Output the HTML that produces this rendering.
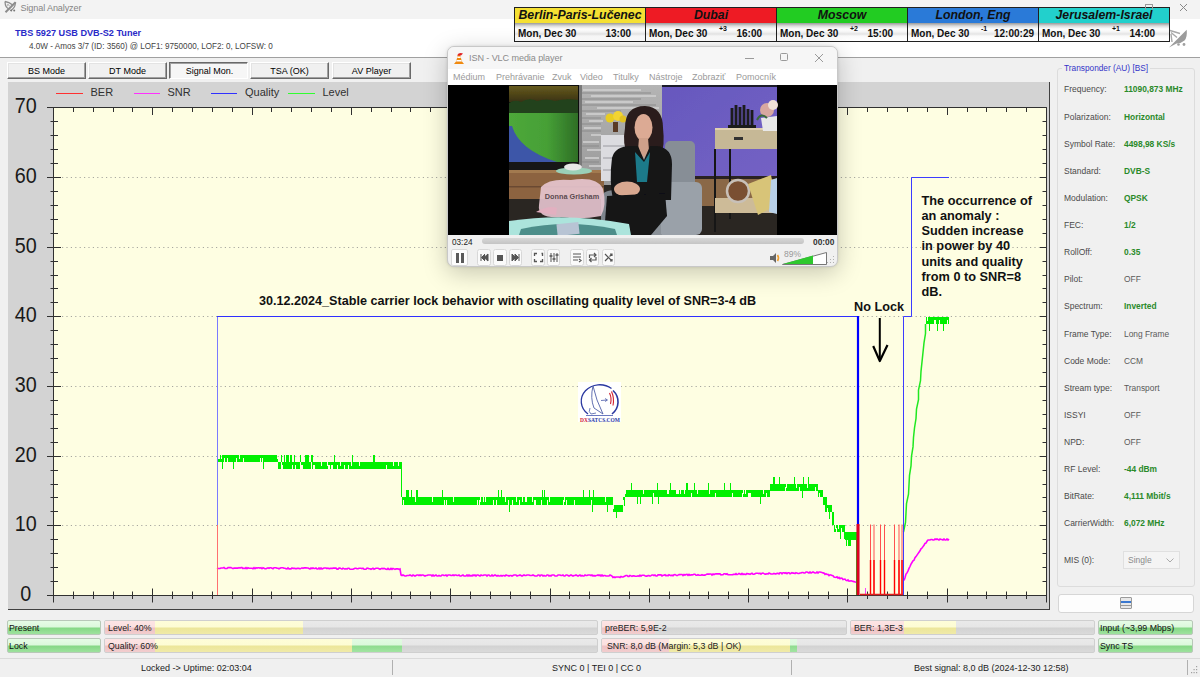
<!DOCTYPE html>
<html><head><meta charset="utf-8">
<style>
*{margin:0;padding:0;box-sizing:border-box}
html,body{width:1200px;height:677px;overflow:hidden;background:#f0f0f0;font-family:"Liberation Sans",sans-serif;position:relative}
.a{position:absolute}
#title{left:0;top:0;width:1200px;height:19px;background:#f3f3f3}
#hdr{left:0;top:19px;width:1200px;height:39px;background:#fff;border-bottom:1px solid #a0a0a0}
.btn{position:absolute;top:62px;height:17px;width:79px;background:#f0f0f0;border-top:1px solid #fff;border-left:1px solid #fff;border-right:1px solid #696969;border-bottom:1px solid #696969;box-shadow:inset -1px -1px 0 #a0a0a0, inset 1px 1px 0 #e3e3e3;font-size:9px;text-align:center;line-height:16px;color:#000}
.btn.pr{padding-left:2px;line-height:17px;border-top:1px solid #696969;border-left:1px solid #696969;border-right:1px solid #fff;border-bottom:1px solid #fff;box-shadow:inset 1px 1px 0 #a0a0a0;background:#f6f6f6}
#chart{left:8px;top:82px;width:1042px;height:528px;background:#d3d3d3;border-right:1px solid #404040;border-bottom:1px solid #404040}
/* time table */
#tz{left:514px;top:7px;width:656px;height:35px;border:1px solid #202020;background:#fff}
.tc{position:absolute;top:0;height:33px;border-right:1px solid #202020}
.th{position:absolute;left:0;top:0;right:0;height:15px;font-weight:bold;font-style:italic;font-size:12.3px;line-height:15px;text-align:center;color:#111}
.tb{position:absolute;left:0;top:15px;right:0;height:18px;background:linear-gradient(#9a9a9a 0px,#dcdcdc 3px,#fff 6px,#f4f4f4 9px,#e4e4e4 11px,#fafafa 13px,#fff 17px);font-weight:bold;font-size:10px;line-height:22px;color:#111}
.tb .d{position:absolute;left:3px;top:0}
.tb .t{position:absolute;right:14px;top:0}
.tb .o{position:absolute;left:73px;top:-5px;font-size:7px}
/* right panel */
#grp{left:1057px;top:68px;width:138px;height:519px;border:1px solid #dcdcdc;border-radius:3px}
#grpt{left:1062px;top:62px;padding:0 2px;background:#f0f0f0;font-size:8.3px;color:#3434c8;line-height:12px}
.rl{position:absolute;left:1064px;font-size:8.5px;color:#4a4a4a;line-height:12px}
.rv{position:absolute;left:1124px;font-size:8.4px;color:#2a8a2a;font-weight:bold;line-height:12px}
.rv.g{color:#5a5a5a;font-weight:normal}
/* bottom bars */
.bar{position:absolute;height:15px;border:1px solid #cfcfcf;border-radius:2px;background:linear-gradient(#e9e9e9 0,#e6e6e6 45%,#d2d2d2 55%,#dadada 100%);overflow:hidden}
.bar .f{position:absolute;top:0;bottom:0}
.bar .txt{position:absolute;left:3px;top:0;font-size:8.8px;line-height:14.5px;color:#222}
.red{background:linear-gradient(#fde4e4 0,#fbe0e0 45%,#eec2c4 55%,#f2cdce 100%)}
.yel{background:linear-gradient(#fefdd8 0,#fdfcd4 45%,#ece69a 55%,#f0eaa8 100%)}
.grn{background:linear-gradient(#e2fbe2 0,#dcf8dc 45%,#8fdc8f 55%,#a2e4a2 100%)}
.gbar{position:absolute;height:15px;border:1px solid #b8c8b8;border-radius:2px;background:linear-gradient(#e6fce6 0,#dcf8dc 45%,#86d886 55%,#9ee29e 100%)}
.gbar .txt{position:absolute;left:1px;top:0;font-size:8.8px;line-height:14.5px;color:#111}
/* status */
#status{left:0;top:658px;width:1200px;height:19px;border-top:1px solid #dadada;background:#f0f0f0}
.st{position:absolute;top:662px;font-size:9px;color:#222;line-height:12px}
.sep{position:absolute;top:660px;width:1px;height:15px;background:#b0b0b0}
/* VLC */
#vlc{left:447px;top:46px;width:391px;height:221px;background:#f0f0f0;border:1px solid #c8c8c8;border-radius:7px;box-shadow:0 6px 24px rgba(0,0,0,0.22),0 0 3px rgba(0,0,0,0.12);overflow:hidden}
</style></head><body>
<div class="a" id="title"></div>
<div class="a" id="hdr"></div>
<div class="btn" style="left:7px">BS Mode</div>
<div class="btn" style="left:88px">DT Mode</div>
<div class="btn pr" style="left:169px">Signal Mon.</div>
<div class="btn" style="left:250px">TSA (OK)</div>
<div class="btn" style="left:332px">AV Player</div>
<div class="a" id="chart"></div>
<svg class="a" style="left:0;top:0" width="1200" height="677" font-family="Liberation Sans, sans-serif"><rect x="53.5" y="107.5" width="993.0" height="487.5" fill="#fefee2"/><line x1="62" y1="525.5" x2="1043" y2="525.5" stroke="#a8a8a0" stroke-width="1" stroke-dasharray="1.2 3.2"/><line x1="62" y1="456.5" x2="1043" y2="456.5" stroke="#a8a8a0" stroke-width="1" stroke-dasharray="1.2 3.2"/><line x1="62" y1="386.5" x2="1043" y2="386.5" stroke="#a8a8a0" stroke-width="1" stroke-dasharray="1.2 3.2"/><line x1="62" y1="316.5" x2="1043" y2="316.5" stroke="#a8a8a0" stroke-width="1" stroke-dasharray="1.2 3.2"/><line x1="62" y1="247.5" x2="1043" y2="247.5" stroke="#a8a8a0" stroke-width="1" stroke-dasharray="1.2 3.2"/><line x1="62" y1="177.5" x2="1043" y2="177.5" stroke="#a8a8a0" stroke-width="1" stroke-dasharray="1.2 3.2"/><path d="M53.5 107.5 V602 M1046.5 107.5 V602 M47 107.5 H1046.5 M47 595.5 H1046.5" stroke="#303030" stroke-width="1" fill="none"/><path d="M47 595.5 H61 M1040 595.5 H1046.5 M50.5 581.5 H58 M1042.5 581.5 H1046.5 M50.5 567.5 H58 M1042.5 567.5 H1046.5 M50.5 553.5 H58 M1042.5 553.5 H1046.5 M50.5 539.5 H58 M1042.5 539.5 H1046.5 M47 525.5 H61 M1040 525.5 H1046.5 M50.5 511.5 H58 M1042.5 511.5 H1046.5 M50.5 497.5 H58 M1042.5 497.5 H1046.5 M50.5 484.5 H58 M1042.5 484.5 H1046.5 M50.5 470.5 H58 M1042.5 470.5 H1046.5 M47 456.5 H61 M1040 456.5 H1046.5 M50.5 442.5 H58 M1042.5 442.5 H1046.5 M50.5 428.5 H58 M1042.5 428.5 H1046.5 M50.5 414.5 H58 M1042.5 414.5 H1046.5 M50.5 400.5 H58 M1042.5 400.5 H1046.5 M47 386.5 H61 M1040 386.5 H1046.5 M50.5 372.5 H58 M1042.5 372.5 H1046.5 M50.5 358.5 H58 M1042.5 358.5 H1046.5 M50.5 344.5 H58 M1042.5 344.5 H1046.5 M50.5 330.5 H58 M1042.5 330.5 H1046.5 M47 316.5 H61 M1040 316.5 H1046.5 M50.5 302.5 H58 M1042.5 302.5 H1046.5 M50.5 288.5 H58 M1042.5 288.5 H1046.5 M50.5 275.5 H58 M1042.5 275.5 H1046.5 M50.5 261.5 H58 M1042.5 261.5 H1046.5 M47 247.5 H61 M1040 247.5 H1046.5 M50.5 233.5 H58 M1042.5 233.5 H1046.5 M50.5 219.5 H58 M1042.5 219.5 H1046.5 M50.5 205.5 H58 M1042.5 205.5 H1046.5 M50.5 191.5 H58 M1042.5 191.5 H1046.5 M47 177.5 H61 M1040 177.5 H1046.5 M50.5 163.5 H58 M1042.5 163.5 H1046.5 M50.5 149.5 H58 M1042.5 149.5 H1046.5 M50.5 135.5 H58 M1042.5 135.5 H1046.5 M50.5 121.5 H58 M1042.5 121.5 H1046.5 M47 107.5 H61 M1040 107.5 H1046.5 M53.5 588.5 V602.5 M53.5 107.5 V115 M73.5 591.5 V599 M73.5 107.5 V112 M93.5 591.5 V599 M93.5 107.5 V112 M113.5 591.5 V599 M113.5 107.5 V112 M132.5 591.5 V599 M132.5 107.5 V112 M152.5 588.5 V602.5 M152.5 107.5 V115 M172.5 591.5 V599 M172.5 107.5 V112 M192.5 591.5 V599 M192.5 107.5 V112 M212.5 591.5 V599 M212.5 107.5 V112 M232.5 591.5 V599 M232.5 107.5 V112 M252.5 588.5 V602.5 M252.5 107.5 V115 M271.5 591.5 V599 M271.5 107.5 V112 M291.5 591.5 V599 M291.5 107.5 V112 M311.5 591.5 V599 M311.5 107.5 V112 M331.5 591.5 V599 M331.5 107.5 V112 M351.5 588.5 V602.5 M351.5 107.5 V115 M371.5 591.5 V599 M371.5 107.5 V112 M391.5 591.5 V599 M391.5 107.5 V112 M410.5 591.5 V599 M410.5 107.5 V112 M430.5 591.5 V599 M430.5 107.5 V112 M450.5 588.5 V602.5 M450.5 107.5 V115 M470.5 591.5 V599 M470.5 107.5 V112 M490.5 591.5 V599 M490.5 107.5 V112 M510.5 591.5 V599 M510.5 107.5 V112 M530.5 591.5 V599 M530.5 107.5 V112 M550.5 588.5 V602.5 M550.5 107.5 V115 M569.5 591.5 V599 M569.5 107.5 V112 M589.5 591.5 V599 M589.5 107.5 V112 M609.5 591.5 V599 M609.5 107.5 V112 M629.5 591.5 V599 M629.5 107.5 V112 M649.5 588.5 V602.5 M649.5 107.5 V115 M669.5 591.5 V599 M669.5 107.5 V112 M689.5 591.5 V599 M689.5 107.5 V112 M708.5 591.5 V599 M708.5 107.5 V112 M728.5 591.5 V599 M728.5 107.5 V112 M748.5 588.5 V602.5 M748.5 107.5 V115 M768.5 591.5 V599 M768.5 107.5 V112 M788.5 591.5 V599 M788.5 107.5 V112 M808.5 591.5 V599 M808.5 107.5 V112 M828.5 591.5 V599 M828.5 107.5 V112 M847.5 588.5 V602.5 M847.5 107.5 V115 M867.5 591.5 V599 M867.5 107.5 V112 M887.5 591.5 V599 M887.5 107.5 V112 M907.5 591.5 V599 M907.5 107.5 V112 M927.5 591.5 V599 M927.5 107.5 V112 M947.5 588.5 V602.5 M947.5 107.5 V115 M967.5 591.5 V599 M967.5 107.5 V112 M986.5 591.5 V599 M986.5 107.5 V112 M1006.5 591.5 V599 M1006.5 107.5 V112 M1026.5 591.5 V599 M1026.5 107.5 V112 M1046.5 588.5 V602.5 M1046.5 107.5 V115" stroke="#303030" stroke-width="1" fill="none"/><text transform="translate(25.8 600.8) scale(0.92 1)" text-anchor="middle" font-size="21.5" fill="#1a1a1a">0</text><text transform="translate(25.8 531.1) scale(0.92 1)" text-anchor="middle" font-size="21.5" fill="#1a1a1a">10</text><text transform="translate(25.8 461.5) scale(0.92 1)" text-anchor="middle" font-size="21.5" fill="#1a1a1a">20</text><text transform="translate(25.8 391.8) scale(0.92 1)" text-anchor="middle" font-size="21.5" fill="#1a1a1a">30</text><text transform="translate(25.8 322.1) scale(0.92 1)" text-anchor="middle" font-size="21.5" fill="#1a1a1a">40</text><text transform="translate(25.8 252.5) scale(0.92 1)" text-anchor="middle" font-size="21.5" fill="#1a1a1a">50</text><text transform="translate(25.8 182.8) scale(0.92 1)" text-anchor="middle" font-size="21.5" fill="#1a1a1a">60</text><text transform="translate(25.8 113.1) scale(0.92 1)" text-anchor="middle" font-size="21.5" fill="#1a1a1a">70</text><line x1="56" y1="93.5" x2="83" y2="93.5" stroke="#ff3030" stroke-width="1"/><text x="90.5" y="96.4" font-size="11" fill="#303030">BER</text><line x1="134" y1="93.5" x2="160" y2="93.5" stroke="#ff30ff" stroke-width="1"/><text x="167.5" y="96.4" font-size="11" fill="#303030">SNR</text><line x1="211" y1="93.5" x2="237" y2="93.5" stroke="#3030ff" stroke-width="1"/><text x="245" y="96.4" font-size="11" fill="#303030">Quality</text><line x1="288" y1="93.5" x2="315" y2="93.5" stroke="#30ff30" stroke-width="1"/><text x="322.5" y="96.4" font-size="11" fill="#303030">Level</text><path d="M217.5 455 V462 M218.5 459 V462 M219.5 459 V462 M220.5 455 V462 M221.5 459 V462 M222.5 455 V469 M223.5 455 V462 M224.5 455 V458 M225.5 455 V462 M226.5 455 V462 M227.5 455 V458 M228.5 455 V462 M229.5 455 V462 M230.5 455 V462 M231.5 455 V462 M232.5 455 V462 M233.5 455 V469 M234.5 455 V462 M235.5 455 V462 M236.5 455 V458 M237.5 455 V462 M238.5 455 V462 M239.5 459 V462 M240.5 455 V462 M241.5 455 V462 M242.5 455 V462 M243.5 455 V458 M244.5 455 V462 M245.5 455 V462 M246.5 455 V462 M247.5 455 V462 M248.5 455 V462 M249.5 455 V462 M250.5 455 V462 M251.5 455 V462 M252.5 455 V462 M253.5 455 V462 M254.5 455 V462 M255.5 455 V462 M256.5 455 V462 M257.5 455 V462 M258.5 455 V462 M259.5 455 V462 M260.5 455 V458 M261.5 455 V462 M262.5 455 V458 M263.5 455 V469 M264.5 455 V462 M265.5 455 V462 M266.5 455 V462 M267.5 455 V462 M268.5 455 V462 M269.5 455 V462 M270.5 455 V462 M271.5 455 V462 M272.5 455 V462 M273.5 455 V462 M274.5 455 V462 M275.5 455 V462 M276.5 455 V462 M277.5 459 V462 M278.5 462 V469 M279.5 462 V469 M280.5 462 V469 M281.5 455 V462 M282.5 462 V465 M283.5 462 V469 M284.5 455 V469 M285.5 462 V469 M286.5 455 V469 M287.5 455 V469 M288.5 455 V469 M289.5 462 V469 M290.5 455 V469 M291.5 455 V469 M292.5 462 V465 M293.5 462 V469 M294.5 455 V469 M295.5 462 V465 M296.5 462 V469 M297.5 462 V469 M298.5 462 V469 M299.5 462 V469 M300.5 455 V462 M301.5 462 V465 M302.5 462 V465 M303.5 462 V469 M304.5 462 V469 M305.5 455 V469 M306.5 455 V469 M307.5 455 V469 M308.5 455 V469 M309.5 462 V469 M310.5 462 V469 M311.5 455 V462 M312.5 455 V469 M313.5 462 V465 M314.5 462 V465 M315.5 462 V469 M316.5 462 V469 M317.5 462 V469 M318.5 462 V469 M319.5 462 V469 M320.5 462 V469 M321.5 466 V469 M322.5 462 V469 M323.5 462 V469 M324.5 462 V469 M325.5 462 V469 M326.5 462 V469 M327.5 466 V469 M328.5 462 V465 M329.5 462 V465 M330.5 462 V469 M331.5 462 V465 M332.5 462 V465 M333.5 462 V469 M334.5 455 V469 M335.5 462 V469 M336.5 462 V469 M337.5 462 V465 M338.5 462 V469 M339.5 462 V469 M340.5 466 V469 M341.5 462 V469 M342.5 462 V469 M343.5 462 V469 M344.5 462 V465 M345.5 462 V469 M346.5 462 V469 M347.5 462 V469 M348.5 462 V465 M349.5 462 V469 M350.5 462 V469 M351.5 466 V469 M352.5 455 V469 M353.5 462 V469 M354.5 462 V469 M355.5 462 V469 M356.5 462 V469 M357.5 462 V469 M358.5 462 V469 M359.5 466 V469 M360.5 462 V469 M361.5 462 V469 M362.5 462 V469 M363.5 462 V469 M364.5 462 V469 M365.5 462 V469 M366.5 462 V469 M367.5 462 V469 M368.5 462 V469 M369.5 462 V469 M370.5 462 V469 M371.5 462 V469 M372.5 462 V469 M373.5 455 V469 M374.5 455 V469 M375.5 462 V469 M376.5 462 V469 M377.5 462 V469 M378.5 462 V469 M379.5 462 V469 M380.5 462 V469 M381.5 462 V469 M382.5 462 V469 M383.5 462 V469 M384.5 462 V469 M385.5 462 V469 M386.5 462 V465 M387.5 462 V469 M388.5 462 V469 M389.5 462 V469 M390.5 462 V469 M391.5 462 V469 M392.5 462 V469 M393.5 466 V469 M394.5 462 V469 M395.5 462 V469 M396.5 462 V469 M397.5 462 V469 M398.5 466 V469 M399.5 462 V469 M400.5 462 V469 M401.5 462 V497 M402.5 497 V505 M403.5 497 V500 M404.5 497 V505 M405.5 497 V505 M406.5 490 V505 M407.5 490 V505 M408.5 490 V505 M409.5 497 V505 M410.5 497 V505 M411.5 490 V505 M412.5 497 V505 M413.5 497 V505 M414.5 497 V505 M415.5 502 V505 M416.5 490 V505 M417.5 490 V505 M418.5 497 V505 M419.5 497 V505 M420.5 497 V505 M421.5 497 V505 M422.5 497 V505 M423.5 497 V505 M424.5 497 V505 M425.5 497 V505 M426.5 497 V505 M427.5 497 V505 M428.5 497 V505 M429.5 497 V505 M430.5 497 V505 M431.5 497 V505 M432.5 502 V505 M433.5 497 V505 M434.5 497 V505 M435.5 497 V505 M436.5 497 V505 M437.5 497 V505 M438.5 497 V505 M439.5 497 V505 M440.5 497 V505 M441.5 497 V505 M442.5 490 V505 M443.5 497 V505 M444.5 497 V500 M445.5 497 V505 M446.5 497 V500 M447.5 497 V505 M448.5 497 V505 M449.5 497 V505 M450.5 497 V505 M451.5 497 V505 M452.5 497 V505 M453.5 502 V505 M454.5 497 V505 M455.5 497 V505 M456.5 497 V505 M457.5 497 V505 M458.5 497 V505 M459.5 497 V505 M460.5 497 V505 M461.5 497 V505 M462.5 497 V505 M463.5 497 V505 M464.5 497 V505 M465.5 497 V505 M466.5 497 V505 M467.5 497 V505 M468.5 497 V505 M469.5 497 V505 M470.5 497 V505 M471.5 497 V505 M472.5 497 V505 M473.5 497 V505 M474.5 497 V505 M475.5 497 V505 M476.5 497 V505 M477.5 497 V500 M478.5 497 V505 M479.5 497 V500 M480.5 502 V505 M481.5 497 V505 M482.5 497 V505 M483.5 502 V505 M484.5 497 V505 M485.5 502 V505 M486.5 497 V505 M487.5 497 V505 M488.5 497 V505 M489.5 497 V505 M490.5 497 V505 M491.5 497 V505 M492.5 497 V505 M493.5 497 V500 M494.5 497 V505 M495.5 497 V505 M496.5 497 V500 M497.5 497 V505 M498.5 490 V505 M499.5 497 V505 M500.5 497 V505 M501.5 490 V505 M502.5 497 V505 M503.5 497 V505 M504.5 497 V505 M505.5 502 V505 M506.5 497 V505 M507.5 497 V505 M508.5 497 V500 M509.5 497 V512 M510.5 497 V505 M511.5 497 V505 M512.5 497 V500 M513.5 497 V505 M514.5 497 V505 M515.5 497 V505 M516.5 502 V505 M517.5 497 V505 M518.5 497 V505 M519.5 497 V500 M520.5 497 V505 M521.5 497 V505 M522.5 502 V505 M523.5 497 V505 M524.5 497 V505 M525.5 502 V505 M526.5 502 V505 M527.5 497 V505 M528.5 497 V505 M529.5 497 V505 M530.5 497 V505 M531.5 497 V505 M532.5 502 V505 M533.5 497 V505 M534.5 497 V500 M535.5 497 V500 M536.5 497 V505 M537.5 497 V505 M538.5 497 V505 M539.5 497 V505 M540.5 497 V505 M541.5 497 V500 M542.5 490 V505 M543.5 497 V505 M544.5 490 V505 M545.5 497 V505 M546.5 497 V505 M547.5 497 V500 M548.5 497 V505 M549.5 502 V505 M550.5 497 V505 M551.5 497 V505 M552.5 497 V505 M553.5 497 V505 M554.5 497 V505 M555.5 497 V505 M556.5 497 V505 M557.5 497 V505 M558.5 497 V505 M559.5 497 V505 M560.5 497 V505 M561.5 497 V505 M562.5 497 V505 M563.5 497 V500 M564.5 502 V505 M565.5 497 V505 M566.5 497 V500 M567.5 497 V505 M568.5 497 V505 M569.5 497 V505 M570.5 497 V505 M571.5 497 V505 M572.5 497 V505 M573.5 497 V505 M574.5 497 V500 M575.5 497 V505 M576.5 497 V505 M577.5 497 V505 M578.5 497 V505 M579.5 497 V505 M580.5 497 V505 M581.5 497 V505 M582.5 497 V505 M583.5 490 V505 M584.5 497 V505 M585.5 497 V505 M586.5 497 V505 M587.5 497 V505 M588.5 497 V505 M589.5 490 V505 M590.5 497 V505 M591.5 497 V500 M592.5 497 V512 M593.5 490 V505 M594.5 497 V505 M595.5 497 V505 M596.5 497 V505 M597.5 497 V505 M598.5 497 V505 M599.5 497 V505 M600.5 497 V505 M601.5 497 V505 M602.5 497 V505 M603.5 497 V505 M604.5 497 V505 M605.5 502 V505 M606.5 497 V505 M607.5 497 V512 M608.5 497 V505 M609.5 497 V505 M610.5 497 V505 M611.5 497 V505 M612.5 497 V505 M613.5 509 V512 M614.5 505 V512 M615.5 505 V512 M616.5 505 V512 M617.5 505 V512 M618.5 505 V512 M619.5 505 V512 M620.5 505 V512 M621.5 505 V512 M622.5 505 V512 M616.5 512 V518 M623.5 497 V500 M624.5 497 V506 M625.5 494 V497 M626.5 490 V497 M627.5 490 V497 M628.5 490 V497 M629.5 490 V497 M630.5 490 V497 M631.5 483 V497 M632.5 490 V497 M633.5 490 V497 M634.5 490 V497 M635.5 490 V497 M636.5 490 V497 M637.5 490 V504 M638.5 490 V497 M639.5 490 V497 M640.5 490 V504 M641.5 490 V497 M642.5 490 V497 M643.5 494 V497 M644.5 490 V497 M645.5 490 V497 M646.5 490 V497 M647.5 490 V497 M648.5 490 V497 M649.5 490 V497 M650.5 490 V497 M651.5 490 V497 M652.5 490 V504 M653.5 490 V493 M654.5 490 V497 M655.5 490 V497 M656.5 490 V497 M657.5 483 V497 M658.5 490 V504 M659.5 490 V497 M660.5 490 V497 M661.5 490 V497 M662.5 490 V497 M663.5 490 V497 M664.5 490 V497 M665.5 490 V497 M666.5 490 V497 M667.5 494 V497 M668.5 494 V497 M669.5 490 V497 M670.5 483 V497 M671.5 490 V497 M672.5 490 V497 M673.5 490 V497 M674.5 490 V497 M675.5 490 V497 M676.5 494 V497 M677.5 494 V497 M678.5 494 V497 M679.5 490 V497 M680.5 494 V497 M681.5 490 V497 M682.5 490 V497 M683.5 490 V497 M684.5 494 V497 M685.5 490 V497 M686.5 483 V497 M687.5 483 V497 M688.5 490 V497 M689.5 490 V497 M690.5 490 V497 M691.5 490 V493 M692.5 490 V497 M693.5 490 V497 M694.5 483 V497 M695.5 490 V497 M696.5 490 V497 M697.5 494 V497 M698.5 490 V497 M699.5 490 V497 M700.5 490 V497 M701.5 490 V497 M702.5 490 V497 M703.5 490 V497 M704.5 490 V497 M705.5 490 V497 M706.5 490 V497 M707.5 490 V497 M708.5 483 V497 M709.5 494 V497 M710.5 490 V497 M711.5 490 V497 M712.5 490 V497 M713.5 490 V497 M714.5 490 V497 M715.5 490 V493 M716.5 490 V497 M717.5 490 V497 M718.5 490 V497 M719.5 490 V497 M720.5 490 V497 M721.5 490 V497 M722.5 490 V497 M723.5 490 V497 M724.5 483 V497 M725.5 490 V497 M726.5 490 V497 M727.5 490 V497 M728.5 490 V497 M729.5 490 V497 M730.5 483 V497 M731.5 490 V497 M732.5 490 V493 M733.5 490 V497 M734.5 490 V497 M735.5 490 V497 M736.5 490 V497 M737.5 490 V497 M738.5 490 V497 M739.5 490 V497 M740.5 490 V497 M741.5 490 V497 M742.5 490 V493 M743.5 494 V497 M744.5 490 V497 M745.5 494 V497 M746.5 490 V497 M747.5 490 V497 M748.5 490 V493 M749.5 490 V493 M750.5 490 V493 M751.5 490 V497 M752.5 490 V497 M753.5 490 V497 M754.5 490 V497 M755.5 490 V497 M756.5 490 V497 M757.5 490 V497 M758.5 490 V497 M759.5 490 V497 M760.5 490 V504 M761.5 490 V497 M762.5 490 V497 M763.5 494 V497 M764.5 490 V497 M765.5 490 V497 M766.5 490 V493 M767.5 490 V497 M768.5 490 V497 M769.5 490 V497 M770.5 484 V491 M771.5 484 V491 M772.5 484 V491 M773.5 477 V491 M774.5 477 V491 M775.5 484 V491 M776.5 484 V491 M777.5 484 V491 M778.5 484 V491 M779.5 477 V491 M780.5 484 V491 M781.5 484 V491 M782.5 484 V491 M783.5 484 V491 M784.5 484 V491 M785.5 484 V487 M786.5 488 V491 M787.5 484 V491 M788.5 484 V491 M789.5 484 V491 M790.5 484 V491 M791.5 484 V491 M792.5 484 V491 M793.5 484 V491 M794.5 477 V491 M795.5 484 V491 M796.5 488 V491 M797.5 484 V491 M798.5 484 V491 M799.5 484 V487 M800.5 484 V491 M801.5 484 V491 M802.5 484 V498 M803.5 477 V491 M804.5 484 V491 M805.5 484 V491 M806.5 484 V491 M807.5 488 V491 M808.5 477 V491 M809.5 484 V491 M810.5 484 V491 M811.5 484 V491 M812.5 484 V491 M813.5 484 V491 M814.5 484 V491 M815.5 484 V487 M816.5 484 V491 M817.5 484 V491 M818.5 490 V497 M819.5 490 V493 M820.5 490 V497 M821.5 490 V497 M822.5 490 V497 M823.5 497 V505 M824.5 497 V505 M825.5 497 V512 M826.5 497 V512 M827.5 505 V508 M828.5 505 V512 M829.5 505 V519 M830.5 505 V512 M831.5 505 V512 M832.5 512 V525 M833.5 512 V525 M834.5 525 V532 M835.5 529 V532 M836.5 525 V528 M837.5 525 V532 M838.5 529 V532 M839.5 525 V532 M840.5 525 V539 M841.5 525 V528 M842.5 525 V532 M843.5 525 V532 M844.5 525 V539 M845.5 532 V540 M846.5 532 V546 M847.5 532 V540 M848.5 532 V546 M849.5 532 V546 M850.5 532 V546 M851.5 532 V540 M852.5 532 V540 M853.5 532 V540 M854.5 532 V540 M855.5 532 V540 M856.5 532 V540 M856.5 540 V595 M926.5 317 V324 M927.5 321 V324 M928.5 317 V324 M929.5 317 V331 M930.5 317 V324 M931.5 317 V324 M932.5 317 V324 M933.5 317 V324 M934.5 317 V320 M935.5 317 V320 M936.5 317 V324 M937.5 317 V331 M938.5 317 V324 M939.5 317 V320 M940.5 317 V324 M941.5 317 V324 M942.5 317 V324 M943.5 317 V331 M944.5 317 V324 M945.5 317 V324 M946.5 317 V324 M947.5 317 V320 M948.5 317 V324" stroke="#00f000" stroke-width="1" fill="none"/><polyline points="903.5,532.0 905.5,522.5 906,513.1 906.5,503.6 908.5,494.2 909,484.7 909.5,475.3 911,465.8 911.5,456.4 913,446.9 913.5,437.5 914.5,428.0 916,418.5 916.5,409.1 918.5,399.6 918.5,390.2 920.5,380.7 921,371.3 922,361.8 923,352.4 924,342.9 925.5,333.5 925.5,324.0" stroke="#20e820" stroke-width="1.5" fill="none"/><polyline points="217,568.0 218,568.5 219,568.5 220,568.5 221,568.0 222,568.0 223,568.0 224,567.5 225,568.5 226,568.5 227,568.5 228,567.6 229,567.6 230,567.6 231,567.6 232,568.1 233,568.6 234,568.1 235,568.1 236,568.1 237,568.1 238,568.1 239,567.6 240,568.1 241,567.6 242,567.6 243,568.6 244,568.1 245,568.6 246,567.6 247,568.6 248,567.7 249,568.2 250,568.2 251,568.2 252,568.2 253,568.7 254,567.7 255,568.7 256,567.7 257,568.2 258,567.7 259,567.7 260,568.2 261,567.7 262,568.7 263,567.7 264,568.2 265,568.7 266,568.7 267,568.2 268,567.8 269,568.3 270,567.8 271,567.8 272,568.3 273,568.8 274,567.8 275,567.8 276,567.8 277,568.3 278,568.3 279,568.8 280,568.3 281,567.8 282,567.8 283,567.8 284,568.3 285,568.3 286,568.8 287,568.9 288,567.9 289,568.9 290,568.9 291,568.9 292,567.9 293,568.4 294,568.4 295,568.4 296,568.9 297,568.4 298,568.4 299,568.4 300,568.9 301,568.4 302,567.9 303,568.4 304,567.9 305,567.9 306,567.9 307,568.0 308,568.0 309,568.5 310,569.0 311,568.0 312,568.5 313,568.0 314,568.5 315,568.5 316,568.0 317,569.0 318,569.0 319,568.0 320,569.0 321,568.0 322,569.0 323,568.5 324,568.0 325,568.0 326,568.0 327,568.5 328,568.1 329,568.6 330,568.6 331,568.1 332,568.6 333,568.1 334,568.1 335,568.1 336,568.1 337,569.1 338,569.1 339,568.1 340,568.1 341,568.6 342,569.1 343,568.1 344,568.6 345,569.1 346,568.6 347,569.1 348,568.2 349,568.2 350,569.2 351,569.2 352,569.2 353,569.2 354,568.7 355,568.2 356,568.2 357,568.7 358,568.7 359,568.2 360,568.2 361,568.2 362,568.7 363,568.2 364,569.2 365,569.2 366,569.2 367,568.2 368,568.3 369,568.8 370,568.8 371,569.3 372,568.8 373,568.3 374,569.3 375,568.8 376,568.3 377,568.3 378,568.3 379,568.8 380,569.3 381,568.8 382,568.3 383,568.8 384,568.3 385,568.8 386,569.3 387,569.4 388,568.4 389,569.4 390,569.4 391,568.4 392,569.4 393,568.4 394,568.9 395,569.4 396,568.9 397,568.9 398,568.9 399,569.4 400,568.9 401,575.0 402,575.5 403,575.0 404,575.5 405,576.0 406,576.0 407,575.5 408,575.5 409,575.5 410,575.0 411,575.5 412,576.0 413,575.0 414,575.5 415,576.0 416,575.5 417,575.0 418,575.0 419,575.5 420,575.0 421,575.5 422,575.0 423,575.0 424,575.5 425,576.0 426,575.5 427,575.5 428,575.0 429,575.0 430,575.0 431,575.0 432,576.0 433,575.0 434,576.0 435,575.5 436,575.0 437,576.0 438,576.0 439,575.5 440,576.0 441,576.0 442,575.0 443,575.0 444,575.5 445,575.5 446,575.0 447,576.0 448,575.0 449,575.0 450,575.0 451,575.5 452,575.5 453,575.0 454,575.5 455,575.0 456,575.0 457,575.5 458,575.5 459,575.0 460,576.0 461,576.0 462,575.5 463,575.0 464,576.0 465,576.0 466,576.0 467,575.0 468,576.0 469,575.0 470,576.0 471,575.5 472,576.0 473,575.0 474,575.5 475,575.0 476,576.0 477,575.0 478,575.0 479,575.5 480,576.0 481,575.0 482,575.5 483,575.5 484,575.0 485,575.0 486,575.0 487,576.0 488,575.0 489,575.0 490,576.0 491,576.0 492,575.0 493,576.0 494,575.5 495,575.0 496,575.5 497,576.0 498,575.5 499,576.0 500,576.0 501,575.5 502,576.0 503,575.5 504,575.5 505,576.0 506,575.0 507,575.5 508,575.5 509,576.0 510,575.5 511,575.5 512,576.0 513,575.5 514,575.0 515,575.0 516,575.0 517,576.0 518,575.5 519,575.5 520,575.0 521,575.5 522,576.0 523,575.5 524,575.0 525,575.5 526,575.5 527,575.0 528,575.0 529,575.0 530,575.5 531,575.5 532,575.5 533,575.0 534,575.5 535,576.0 536,576.0 537,576.0 538,575.0 539,575.0 540,576.0 541,575.0 542,575.0 543,576.0 544,575.5 545,576.0 546,576.0 547,575.0 548,575.0 549,576.0 550,575.5 551,576.0 552,575.0 553,575.0 554,575.0 555,576.0 556,576.0 557,576.0 558,575.0 559,575.0 560,575.0 561,575.5 562,575.5 563,575.0 564,576.0 565,576.0 566,575.0 567,575.0 568,575.5 569,576.0 570,575.5 571,575.0 572,575.5 573,576.0 574,575.5 575,575.5 576,575.0 577,575.5 578,576.0 579,575.5 580,575.0 581,576.0 582,575.5 583,576.0 584,576.0 585,575.0 586,575.5 587,575.5 588,575.0 589,575.0 590,575.0 591,575.5 592,575.0 593,576.0 594,575.5 595,576.0 596,575.5 597,575.5 598,575.0 599,575.5 600,575.0 601,576.0 602,575.0 603,576.0 604,575.5 605,575.5 606,576.0 607,576.0 608,576.0 609,576.0 610,575.0 611,575.5 612,576.0 613,577.5 614,577.0 615,577.5 616,577.0 617,577.0 618,577.0 619,577.0 620,577.5 621,576.5 622,577.0 623,577.0 624,576.5 625,576.0 626,575.5 627,575.5 628,576.4 629,576.4 630,575.4 631,575.9 632,576.4 633,575.9 634,575.8 635,576.3 636,576.3 637,576.3 638,575.8 639,576.3 640,575.2 641,576.2 642,575.2 643,575.2 644,575.2 645,575.7 646,576.1 647,576.1 648,575.6 649,575.6 650,576.1 651,575.6 652,575.0 653,575.0 654,575.5 655,575.0 656,576.0 657,576.0 658,574.9 659,574.9 660,574.9 661,574.9 662,575.9 663,575.3 664,575.3 665,574.8 666,575.8 667,575.3 668,575.8 669,574.7 670,575.2 671,575.7 672,575.2 673,575.7 674,574.7 675,574.6 676,575.1 677,575.6 678,575.1 679,574.6 680,574.6 681,574.5 682,574.5 683,575.5 684,574.5 685,575.0 686,574.5 687,574.4 688,575.4 689,574.4 690,575.4 691,574.9 692,574.9 693,574.8 694,574.3 695,574.3 696,575.3 697,575.3 698,574.7 699,575.2 700,575.2 701,575.2 702,574.7 703,575.2 704,575.1 705,575.1 706,574.6 707,574.1 708,574.1 709,574.1 710,574.0 711,574.0 712,575.0 713,574.0 714,574.5 715,574.0 716,573.9 717,573.9 718,573.9 719,573.9 720,573.9 721,574.9 722,574.8 723,574.8 724,573.8 725,573.8 726,574.3 727,573.8 728,574.7 729,574.7 730,574.7 731,574.7 732,574.7 733,574.6 734,574.1 735,574.6 736,573.6 737,574.6 738,574.1 739,573.5 740,574.0 741,574.5 742,573.5 743,574.5 744,574.0 745,574.4 746,574.4 747,573.4 748,573.9 749,573.9 750,574.4 751,573.8 752,573.3 753,574.3 754,574.3 755,573.8 756,573.3 757,573.2 758,573.2 759,573.7 760,573.2 761,574.2 762,573.2 763,573.1 764,573.6 765,574.1 766,574.1 767,573.6 768,574.0 769,573.0 770,573.5 771,574.0 772,574.0 773,574.0 774,573.4 775,573.9 776,573.9 777,573.4 778,573.4 779,573.9 780,572.8 781,572.8 782,573.8 783,572.8 784,572.8 785,573.3 786,572.7 787,573.7 788,572.7 789,572.7 790,573.7 791,573.2 792,572.6 793,573.1 794,573.1 795,573.6 796,572.6 797,573.1 798,573.5 799,573.5 800,573.0 801,573.0 802,572.5 803,572.5 804,573.0 805,573.0 806,572.0 807,572.0 808,572.5 809,573.0 810,572.0 811,573.0 812,572.5 813,572.0 814,572.5 815,573.0 816,573.0 817,572.0 818,573.0 819,572.0 820,572.0 821,572.3 822,572.6 823,572.9 824,573.1 825,574.4 826,573.7 827,574.5 828,574.3 829,575.6 830,574.8 831,575.1 832,575.4 833,575.7 834,577.0 835,577.3 836,577.5 837,576.8 838,578.1 839,577.4 840,578.7 841,578.0 842,578.2 843,579.5 844,579.3 845,579.1 846,580.4 847,580.7 848,579.9 849,581.2 850,581.0 851,580.8 852,581.1 853,581.4 854,581.6 855,581.9 856,582.2" stroke="#ff00ff" stroke-width="1.6" fill="none"/><polyline points="904,580.5 905,577.7 906,574.1 907,572.9 908,570.8 909,568.4 910,566.5 911,564.2 912,562.5 913,560.9 914,560.2 915,557.7 916,556.6 917,555.1 918,553.6 919,552.2 920,550.8 921,548.8 922,548.0 923,546.6 924,545.2 925,543.4 926,543.1 927,541.3 928,540.0 929,540.0 930,540.0 931,539.5 932,539.5 933,540.0 934,540.0 935,539.0 936,539.5 937,539.0 938,539.5 939,540.0 940,539.0 941,539.5 942,539.5 943,540.0 944,539.0 945,540.0 946,540.0 947,539.0 948,540.0 949,539.0" stroke="#ff00ff" stroke-width="1.6" fill="none"/><path d="M865.5 595 V588" stroke="#ff40ff" stroke-width="1"/><path d="M217.5 525 V316.5" stroke="#7a7aff" stroke-width="1" fill="none"/><path d="M217 316.5 H857" stroke="#3030ff" stroke-width="1" fill="none"/><path d="M858 316 V595" stroke="#0000ff" stroke-width="2.2" fill="none"/><path d="M903.5 595 V316.5 H911.5 V177.5 H949" stroke="#3c3cff" stroke-width="1" fill="none"/><path d="M217.5 595 V525" stroke="#ff7070" stroke-width="1" fill="none"/><path d="M858 524 V595" stroke="#e00020" stroke-width="3" fill="none"/><path d="M870.5 524.5 V595" stroke="#ff5050" stroke-width="1" fill="none"/><path d="M870.5 560 V595" stroke="#ff0000" stroke-width="1.4" fill="none"/><path d="M874 524.5 V595" stroke="#ff5050" stroke-width="1" fill="none"/><path d="M874 560 V595" stroke="#ff0000" stroke-width="1.4" fill="none"/><path d="M880.5 524.5 V595" stroke="#ff5050" stroke-width="1" fill="none"/><path d="M880.5 560 V595" stroke="#ff0000" stroke-width="1.4" fill="none"/><path d="M884.5 524.5 V595" stroke="#ff5050" stroke-width="1" fill="none"/><path d="M884.5 560 V595" stroke="#ff0000" stroke-width="1.4" fill="none"/><path d="M894.5 524.5 V595" stroke="#ff5050" stroke-width="1" fill="none"/><path d="M894.5 560 V595" stroke="#ff0000" stroke-width="1.4" fill="none"/><path d="M899 524.5 V595" stroke="#ff5050" stroke-width="1" fill="none"/><path d="M899 560 V595" stroke="#ff0000" stroke-width="1.4" fill="none"/><path d="M902 524.5 V595" stroke="#ff5050" stroke-width="1" fill="none"/><path d="M902 560 V595" stroke="#ff0000" stroke-width="1.4" fill="none"/><path d="M860 594.5 H903" stroke="#e02020" stroke-width="1.5" fill="none"/><text x="259" y="305" font-size="12.6" font-weight="bold" fill="#111" textLength="497" lengthAdjust="spacingAndGlyphs">30.12.2024_Stable carrier lock behavior with oscillating quality level of SNR=3-4 dB</text><text x="854" y="310.8" font-size="12.6" font-weight="bold" fill="#111" textLength="50" lengthAdjust="spacingAndGlyphs">No Lock</text><text x="921.5" y="204.8" font-size="12.75" font-weight="bold" fill="#111">The occurrence of</text><text x="921.5" y="220.0" font-size="12.75" font-weight="bold" fill="#111">an anomaly :</text><text x="921.5" y="235.1" font-size="12.75" font-weight="bold" fill="#111">Sudden increase</text><text x="921.5" y="250.3" font-size="12.75" font-weight="bold" fill="#111">in power by 40</text><text x="921.5" y="265.5" font-size="12.75" font-weight="bold" fill="#111">units and quality</text><text x="921.5" y="280.6" font-size="12.75" font-weight="bold" fill="#111">from 0 to SNR=8</text><text x="921.5" y="295.8" font-size="12.75" font-weight="bold" fill="#111">dB.</text><path d="M879.8 318 V360" stroke="#000" stroke-width="2"/><path d="M873.2 346 L879.8 361 L887.5 345" stroke="#000" stroke-width="2.2" fill="none" stroke-linejoin="round"/><g>
<rect x="578" y="382" width="43" height="40" fill="#fff"/>
<path d="M588 414 A18.5 16.5 0 1 1 611.5 388.5" stroke="#2a38a0" stroke-width="1.3" fill="none"/>
<path d="M613 390.5 A18.5 16.5 0 0 1 612 414" stroke="#2a38a0" stroke-width="1.6" fill="none"/>
<path d="M586 415.5 H613" stroke="#6a78c0" stroke-width="1"/>
<path d="M593 386 Q596 400 603 414 M593 386 Q590 398 594 408 L603 414" stroke="#5060a8" stroke-width="0.9" fill="none"/>
<path d="M590 408 Q588 412 591 414 L596 413" stroke="#6070b0" stroke-width="0.9" fill="none"/>
<path d="M601 400.5 L607 400 M605 398.5 L607.5 400 L605 401.5" stroke="#4a5aa8" stroke-width="0.8" fill="none"/>
<path d="M609.5 393 Q612 398 610.5 404 M611.5 391.5 Q614.5 398 613 405.5" stroke="#d02030" stroke-width="1.1" fill="none"/>
<text x="580" y="421.5" font-size="6.2" font-weight="bold" fill="#2a38a0" font-family="Liberation Serif" textLength="40" lengthAdjust="spacingAndGlyphs"><tspan fill="#d02030">DX</tspan>SATCS.COM</text>
</g></svg>
<!-- title bar -->
<svg class="a" style="left:0;top:0" width="20" height="16" viewBox="0 0 20 16"><path d="M5.5 12.3 L15.6 2.2" stroke="#8c8c8c" stroke-width="2"/><path d="M5 1.5 Q5.2 8.5 9.5 8.8 M5 1.5 Q9 2 12.8 5" stroke="#8c8c8c" stroke-width="1.3" fill="none"/><path d="M7 4 L10.5 6.5 M7 6.5 L8.5 4" stroke="#a8a8a8" stroke-width="0.8"/><path d="M15.6 2.2 Q15 9 10 10.5" stroke="#8c8c8c" stroke-width="1.2" fill="none"/><circle cx="11.3" cy="10.6" r="0.9" fill="#777"/><circle cx="14.2" cy="10.5" r="1" fill="#777"/></svg>
<div class="a" style="left:20.5px;top:1px;font-size:9.1px;letter-spacing:-0.12px;color:#858585;line-height:14px">Signal Analyzer</div>
<div class="a" style="left:15px;top:27px;font-size:9.15px;font-weight:bold;color:#2a2ac8;line-height:12px">TBS 5927 USB DVB-S2 Tuner</div>
<div class="a" style="left:29px;top:41px;font-size:8.13px;color:#444;line-height:11px">4.0W - Amos 3/7 (ID: 3560) @ LOF1: 9750000, LOF2: 0, LOFSW: 0</div>
<!-- close X -->
<svg class="a" style="left:1178px;top:3px" width="12" height="10"><path d="M2 1 L9 8 M9 1 L2 8" stroke="#888" stroke-width="1"/></svg>
<!-- time table -->
<div class="a" id="tz">
 <div class="tc" style="left:0;width:131px"><div class="th" style="background:#f5e033">Berlin-Paris-Lučenec</div><div class="tb"><span class="d">Mon, Dec 30</span><span class="t">13:00</span></div></div>
 <div class="tc" style="left:131px;width:131px"><div class="th" style="background:#ee1b24">Dubai</div><div class="tb"><span class="d">Mon, Dec 30</span><span class="o">+3</span><span class="t">16:00</span></div></div>
 <div class="tc" style="left:262px;width:131px"><div class="th" style="background:#22cc22">Moscow</div><div class="tb"><span class="d">Mon, Dec 30</span><span class="o">+2</span><span class="t">15:00</span></div></div>
 <div class="tc" style="left:393px;width:131px"><div class="th" style="background:#2a7ad8">London, Eng</div><div class="tb"><span class="d">Mon, Dec 30</span><span class="o">-1</span><span class="t" style="right:4px">12:00:29</span></div></div>
 <div class="tc" style="left:524px;width:130px;border-right:none"><div class="th" style="background:#22d0cc">Jerusalem-Israel</div><div class="tb"><span class="d">Mon, Dec 30</span><span class="o">+1</span><span class="t">14:00</span></div></div>
</div>
<svg class="a" style="left:1168px;top:28px" width="22" height="22" viewBox="0 0 22 22"><path d="M1 19.5 L18.7 1.7 Q19.5 9 16.5 12.5 Q13 15.5 8.5 15.5 Z" fill="#9c9c9c"/><path d="M2 2.5 L12 5.5 M3 4.5 L9 9.5 M3 6 L4 14" stroke="#a8a8a8" stroke-width="1.4"/><circle cx="10.5" cy="16.5" r="1.3" fill="#a0a0a0"/><circle cx="16" cy="16.5" r="1.4" fill="#a0a0a0"/></svg>
<!-- right panel -->
<div class="a" id="grp"></div>
<div class="a" id="grpt">Transponder (AU) [BS]</div>
<div class="rl" style="top:83.4px">Frequency:</div><div class="rv" style="top:83.4px">11090,873 MHz</div>
<div class="rl" style="top:110.5px">Polarization:</div><div class="rv" style="top:110.5px">Horizontal</div>
<div class="rl" style="top:137.6px">Symbol Rate:</div><div class="rv" style="top:137.6px">4498,98 KS/s</div>
<div class="rl" style="top:164.8px">Standard:</div><div class="rv" style="top:164.8px">DVB-S</div>
<div class="rl" style="top:191.9px">Modulation:</div><div class="rv" style="top:191.9px">QPSK</div>
<div class="rl" style="top:219.0px">FEC:</div><div class="rv" style="top:219.0px">1/2</div>
<div class="rl" style="top:246.1px">RollOff:</div><div class="rv" style="top:246.1px">0.35</div>
<div class="rl" style="top:273.2px">Pilot:</div><div class="rv g" style="top:273.2px">OFF</div>
<div class="rl" style="top:300.4px">Spectrum:</div><div class="rv" style="top:300.4px">Inverted</div>
<div class="rl" style="top:327.5px">Frame Type:</div><div class="rv g" style="top:327.5px">Long Frame</div>
<div class="rl" style="top:354.6px">Code Mode:</div><div class="rv g" style="top:354.6px">CCM</div>
<div class="rl" style="top:381.7px">Stream type:</div><div class="rv g" style="top:381.7px">Transport</div>
<div class="rl" style="top:408.8px">ISSYI</div><div class="rv g" style="top:408.8px">OFF</div>
<div class="rl" style="top:436.0px">NPD:</div><div class="rv g" style="top:436.0px">OFF</div>
<div class="rl" style="top:463.1px">RF Level:</div><div class="rv" style="top:463.1px">-44 dBm</div>
<div class="rl" style="top:490.2px">BitRate:</div><div class="rv" style="top:490.2px">4,111 Mbit/s</div>
<div class="rl" style="top:517.3px">CarrierWidth:</div><div class="rv" style="top:517.3px">6,072 MHz</div>
<div class="rl" style="top:554px">MIS (0):</div>
<div class="a" style="left:1123px;top:551px;width:57px;height:18px;border:1px solid #e0e0e0;background:#f4f4f4;font-size:8.5px;color:#8a8a8a;line-height:16px;padding-left:4px">Single<svg style="position:absolute;right:5px;top:6px" width="8" height="5"><path d="M0.5 0.5 L4 4 L7.5 0.5" stroke="#aaa" fill="none"/></svg></div>
<!-- bottom bars -->
<div class="gbar" style="left:7px;top:620px;width:94px"><span class="txt">Present</span></div>
<div class="gbar" style="left:7px;top:638px;width:94px"><span class="txt">Lock</span></div>
<div class="bar" style="left:104px;top:620px;width:494px"><div class="f red" style="left:0;width:50px"></div><div class="f yel" style="left:50px;width:148px"></div><span class="txt">Level: 40%</span></div>
<div class="bar" style="left:104px;top:638px;width:494px"><div class="f red" style="left:0;width:50px"></div><div class="f yel" style="left:50px;width:197px"></div><div class="f grn" style="left:247px;width:50px"></div><span class="txt">Quality: 60%</span></div>
<div class="bar" style="left:601px;top:620px;width:246px"><div class="f red" style="left:0;width:53px"></div><span class="txt">preBER: 5,9E-2</span></div>
<div class="bar" style="left:850px;top:620px;width:245px"><div class="f red" style="left:0;width:53px"></div><div class="f yel" style="left:53px;width:52px"></div><span class="txt">BER: 1,3E-3</span></div>
<div class="bar" style="left:601px;top:638px;width:494px"><div class="f red" style="left:0;width:67px"></div><div class="f yel" style="left:67px;width:121px"></div><div class="f grn" style="left:188px;width:7px"></div><span class="txt" style="left:5px">SNR: 8,0 dB (Margin: 5,3 dB | OK)</span></div>
<div class="gbar" style="left:1098px;top:620px;width:95px"><span class="txt">Input (~3,99 Mbps)</span></div>
<div class="gbar" style="left:1098px;top:638px;width:95px"><span class="txt">Sync TS</span></div>
<!-- right button -->
<div class="a" style="left:1058px;top:594px;width:136px;height:19px;background:#fdfdfd;border:1px solid #d6d6d6;border-radius:3px"></div>
<div class="a" style="left:1120px;top:597px;width:12px;height:12px;border:1px solid #9a9a9a;border-radius:1px;background:linear-gradient(#e8e8e8 0,#e8e8e8 3px,#3a78d0 3px,#3a78d0 5px,#e8e8e8 5px,#e8e8e8 7px,#999 7px,#999 8px,#e8e8e8 8px)"></div>
<!-- status -->
<div class="a" id="status"></div>
<div class="st" style="left:141px">Locked -&gt; Uptime: 02:03:04</div>
<div class="sep" style="left:392px"></div>
<div class="st" style="left:552px">SYNC 0 | TEI 0 | CC 0</div>
<div class="sep" style="left:791px"></div>
<div class="st" style="left:914px">Best signal: 8,0 dB (2024-12-30 12:58)</div>
<div class="sep" style="left:1187px"></div>
<svg class="a" style="left:1189px;top:664px" width="10" height="12"><g fill="#a0a0a0"><rect x="7" y="2" width="1.2" height="1.2"/><rect x="4.5" y="5" width="1.2" height="1.2"/><rect x="7" y="5" width="1.2" height="1.2"/><rect x="2" y="8" width="1.2" height="1.2"/><rect x="4.5" y="8" width="1.2" height="1.2"/><rect x="7" y="8" width="1.2" height="1.2"/></g></svg>
<div class="a" style="left:1145px;top:4px;width:8px;height:6px;border:1px solid #999;border-bottom:none;border-radius:1px"></div>
<div class="a" id="vlc">
 <div class="a" style="left:0;top:0;width:389px;height:22px;background:#f6f6f6"></div>
 <svg class="a" style="left:5px;top:5px" width="12" height="13" viewBox="0 0 12 13"><path d="M1 12 L11 12 L9 9.5 L7 3 L5 3 L3 9.5 Z" fill="#f08a10"/><path d="M3.6 8 L8.4 8 L8.9 9.6 L3.1 9.6Z M4.6 4.6 L7.4 4.6 L7.8 6 L4.2 6Z" fill="#fff"/><path d="M4 3.5 Q6 0 10 1.5 L8 3.5Z" fill="#e02020"/></svg>
 <div class="a" style="left:21px;top:5px;font-size:9.1px;color:#8a8a8a;line-height:13px;letter-spacing:-0.1px">ISN - VLC media player</div>
 <div class="a" style="left:297px;top:11px;width:9px;height:1px;background:#9a9a9a"></div>
 <div class="a" style="left:332px;top:6px;width:8px;height:8px;border:1px solid #9a9a9a;border-radius:1.5px"></div>
 <svg class="a" style="left:366px;top:6px" width="10" height="10"><path d="M1 1 L9 9 M9 1 L1 9" stroke="#9a9a9a" stroke-width="1"/></svg>
 <div class="a" style="left:0;top:22px;width:389px;height:16px;background:#fff;font-size:9px;color:#9a9a9a;line-height:16px;white-space:nowrap">
  <span class="a" style="left:5px">Médium</span><span class="a" style="left:48px">Prehrávanie</span><span class="a" style="left:104px">Zvuk</span><span class="a" style="left:132px">Video</span><span class="a" style="left:165px">Titulky</span><span class="a" style="left:201px">Nástroje</span><span class="a" style="left:244px">Zobraziť</span><span class="a" style="left:288px">Pomocník</span>
 </div>
 <svg class="a" style="left:0;top:38px" width="389" height="150" viewBox="447 85 389 150">
  <defs>
   <linearGradient id="sky" x1="0" y1="0" x2="0" y2="1"><stop offset="0" stop-color="#665a1e"/><stop offset="1" stop-color="#3a3212"/></linearGradient>
   <linearGradient id="grs" x1="0" y1="0" x2="1" y2="0"><stop offset="0" stop-color="#4ea83a"/><stop offset="0.55" stop-color="#46a036"/><stop offset="1" stop-color="#2e6e26"/></linearGradient>
   <linearGradient id="pur" x1="0" y1="0" x2="1" y2="1"><stop offset="0" stop-color="#6658be"/><stop offset="1" stop-color="#7462c4"/></linearGradient>
   <linearGradient id="wal" x1="0" y1="0" x2="0" y2="1"><stop offset="0" stop-color="#b4b4b4"/><stop offset="1" stop-color="#9a9a9a"/></linearGradient>
   <filter id="bl"><feGaussianBlur stdDeviation="0.7"/></filter>
  </defs>
  <rect x="447" y="85" width="389" height="150" fill="#000"/>
  <g filter="url(#bl)">
  <rect x="508" y="85" width="268" height="150" fill="#2a2624"/>
  <!-- stone wall -->
  <rect x="578" y="85" width="83" height="100" fill="url(#wal)"/>
  <g stroke="#d2d2d2" stroke-width="1.5"><path d="M582 90H640 M590 96H655 M584 102H632 M596 108H658 M585 114H604 M588 121H602 M583 128H600 M590 135H600 M582 142H598 M586 150H600 M584 158H598 M588 166H600 M582 174H596"/></g>
  <g stroke="#8a8a8a" stroke-width="1"><path d="M580 93H650 M580 99H640 M580 105H655 M580 111H620 M580 118H600 M580 124H600 M580 131H600 M580 146H598 M580 162H598"/></g>
  <rect x="578" y="85" width="3" height="100" fill="#7a7a7a"/>
  <!-- TV -->
  <rect x="508" y="85" width="70" height="85" fill="#111"/>
  <rect x="508" y="86" width="69" height="16" fill="url(#sky)"/>
  <path d="M508 103 Q514 99 520 102 Q528 97 536 101 Q546 98 554 101 Q566 98 577 100 V114 H508Z" fill="#22421c"/>
  <rect x="508" y="113" width="69" height="50" fill="url(#grs)"/>
  <path d="M508 126 L511 126 Q518 150 556 162 L508 162Z" fill="#3c56a8"/>
  <rect x="508" y="162" width="70" height="8" fill="#161616"/>
  <!-- wood cabinet -->
  <rect x="508" y="170" width="95" height="29" fill="#8c6440"/>
  <rect x="508" y="170" width="95" height="3" fill="#a27a50"/>
  <rect x="508" y="186" width="95" height="1.5" fill="#6a4a30"/>
  <!-- purple screen -->
  <rect x="661" y="85" width="115" height="93" fill="url(#pur)"/>
  <rect x="661" y="85" width="115" height="2" fill="#1a1a2a"/>
  <rect x="661" y="178" width="115" height="28" fill="#8a6846"/>
  <rect x="661" y="176" width="115" height="3" fill="#2a2020"/>
  <!-- drawers white -->
  <rect x="600" y="135" width="28" height="46" fill="#dcdce0"/>
  <path d="M602 146H626 M602 158H626 M602 170H626" stroke="#9a9aa0" stroke-width="1"/>
  <!-- flowers -->
  <circle cx="609" cy="118" r="4.5" fill="#e8cc20"/><circle cx="617" cy="116" r="5" fill="#f2d430"/><circle cx="622" cy="119" r="3.5" fill="#e0c020"/><rect x="612" y="122" width="5" height="10" fill="#5a3a28"/>
  <!-- bowl table -->
  <ellipse cx="573" cy="171" rx="18" ry="3.5" fill="#9ad0b8"/><ellipse cx="572" cy="167" rx="9" ry="3.5" fill="#e8e8e8"/>
  <!-- console -->
  <rect x="714" y="128" width="62" height="21" fill="#c6b896"/>
  <rect x="714" y="128" width="62" height="2" fill="#e0d0b0"/>
  <rect x="733" y="137" width="9" height="3" fill="#303030"/>
  <rect x="713" y="149" width="2" height="83" fill="#161616"/><rect x="728" y="149" width="2" height="70" fill="#161616"/>
  <rect x="714" y="198" width="62" height="15" fill="#cdbb98"/>
  <path d="M731 127 V108 M735 127 V105 M739 127 V107 M743 127 V105 M747 127 V109 M751 127 V110" stroke="#1a1a1a" stroke-width="2.8"/>
  <rect x="727" y="125" width="28" height="3" fill="#1a1a1a"/>
  <circle cx="766" cy="110" r="7" fill="#d8a8a0"/><circle cx="772" cy="105" r="5" fill="#f0e0d8"/><path d="M760 118 L776 116 V131 H762Z" fill="#e8e8e8"/><path d="M756 120 Q760 112 766 118" stroke="#3a6a3a" stroke-width="2" fill="none"/>
  <!-- vase -->
  <ellipse cx="737" cy="191" rx="11" ry="11" fill="#7a5030" stroke="#c8c0b8" stroke-width="2.5"/>
  <!-- pillow -->
  <path d="M747 184 L770 175 L776 205 L757 215 Z" fill="#d8c478"/>
  <path d="M770 180 L776 178 L776 214 L768 212Z" fill="#b8d0e8"/>
  <!-- chair -->
  <rect x="664" y="141" width="30" height="56" rx="5" fill="#878e96"/>
  <path d="M600 200 Q600 190 614 190 L660 190 L660 235 L600 235Z" fill="#7e858d"/>
  <rect x="655" y="182" width="46" height="53" rx="6" fill="#9aa1a9"/>
  <rect x="622" y="212" width="38" height="23" fill="#8a9198"/>
  <!-- woman -->
  <path d="M624 128 Q624 106 644 106 Q662 107 662 128 Q664 146 660 154 L652 150 L636 150 L627 156 Q621 144 624 128Z" fill="#2a1c1a"/>
  <ellipse cx="642.5" cy="127.5" rx="9" ry="13.5" fill="#dcaa94"/>
  <path d="M638 138 L647 138 L648 150 L643 158 L637 150Z" fill="#cfa08a"/>
  <path d="M611 158 Q614 146 630 146 L637 146 L643 160 L649 146 L656 146 Q671 148 671 164 L670 200 L612 200 Q608 180 611 158Z" fill="#151517"/>
  <path d="M634 152 L643 162 L649 152 L646 182 L636 182Z" fill="#1c7a8a"/>
  <ellipse cx="626" cy="189" rx="13" ry="7.5" fill="#d8a890"/>
  <path d="M606 196 L664 193 L666 216 L650 235 L603 235 Z" fill="#121214"/>
  <!-- donna blob -->
  <path d="M540 187 Q548 178 570 180 Q596 176 602 189 Q606 205 600 216 Q580 220 560 217 Q536 219 538 205 Z" fill="#e8c6d2" opacity="0.9"/>
  <path d="M535 212 Q548 205 556 208 L555 215 Z" fill="#e2b0c0"/>
  <!-- round table -->
  <path d="M508 221 Q566 212 628 224 L630 235 L508 235Z" fill="#ace4dc"/>
  <path d="M520 229 Q566 219 614 229 L616 235 L518 235Z" fill="#4e8e8a"/>
  <rect x="556" y="223" width="22" height="12" fill="#b8c4d4" transform="rotate(-6 567 229)"/>
  </g>
  <text x="571" y="199" font-size="7.3" font-weight="bold" fill="#5a4a50" text-anchor="middle" font-family="Liberation Sans">Donna Grisham</text>
 </svg>
 <!-- controls -->
 <div class="a" style="left:4px;top:190px;font-size:8.2px;color:#222;line-height:11px">03:24</div>
 <div class="a" style="left:34px;top:191px;width:322px;height:6px;border-radius:3px;background:linear-gradient(#d8d8d8,#c4c4c4)"></div>
 <div class="a" style="left:365px;top:190px;font-size:8.4px;color:#333;font-weight:bold;line-height:11px">00:00</div>
 <div class="a" style="left:3px;top:202px;width:17px;height:17px;background:#fdfdfd;border:1px solid #d8d8d8;border-radius:2px"></div>
 <div class="a" style="left:8px;top:206px;width:3px;height:10px;background:#5a5a5a"></div><div class="a" style="left:13px;top:206px;width:3px;height:10px;background:#5a5a5a"></div>
 <!-- btn groups -->
 <svg class="a" style="left:29px;top:202px" width="340" height="18">
  <g fill="#fafafa" stroke="#d8d8d8">
   <rect x="0.5" y="0.5" width="13" height="16" rx="2"/><rect x="16.5" y="0.5" width="13" height="16" rx="2"/><rect x="32.5" y="0.5" width="12" height="16" rx="2"/>
   <rect x="54.5" y="0.5" width="13" height="16" rx="2"/><rect x="70.5" y="0.5" width="12" height="16" rx="2"/>
   <rect x="93.5" y="0.5" width="13" height="16" rx="2"/><rect x="109.5" y="0.5" width="12" height="16" rx="2"/><rect x="125.5" y="0.5" width="12" height="16" rx="2"/>
  </g>
  <g fill="#555" stroke="#555">
   <path d="M4 5 V12 M11 5 L7 8.5 L11 12Z M8 5 L4.5 8.5 L8 12" stroke-width="1"/>
   <rect x="20" y="6" width="6" height="6" stroke="none"/>
   <path d="M35 5 L38.5 8.5 L35 12Z M38 5 L41.5 8.5 L38 12Z M42 5 V12" stroke-width="1"/>
  </g>
  <g fill="none" stroke="#555" stroke-width="1.3">
   <path d="M57.5 7 V4.5 H60 M65 4.5 H64.5 H65.5 V7 M65.5 10 V12.5 H63 M60 12.5 H57.5 V10"/>
   <path d="M74 4 V13 M77 4 V13 M80 4 V13" stroke-width="1"/><path d="M72.5 7H75.5 M75.5 10H78.5 M78.5 6H81.5" stroke-width="1.3"/>
   <path d="M96 5H104 M96 8H104 M96 11H101 M102 10 L104 11.5 L102 13" stroke-width="1.2"/>
   <path d="M112.5 9 V6 H119 M117 4 L119 6 L117 8 M119 8 V11 H112.5 M114.5 13 L112.5 11 L114.5 9" stroke-width="1.2"/>
   <path d="M128 5 L135 12 M128 12 L131 9 M132.5 7.5 L135 5 M133 5 H135 V7 M133 12 H135 V10" stroke-width="1.2"/>
  </g>
 </svg>
 <svg class="a" style="left:321px;top:205px" width="12" height="12"><path d="M1 4 H4 L7 1 V11 L4 8 H1Z" fill="#666"/><path d="M8.5 3 Q10.5 6 8.5 9" stroke="#f0a030" stroke-width="1.6" fill="none"/></svg>
 <div class="a" style="left:336px;top:203px;font-size:8.5px;color:#999;line-height:9px">89%</div>
 <svg class="a" style="left:333px;top:204px" width="48" height="15"><path d="M1.5 13.5 L45.5 1.5 V13.5Z" fill="#fff" stroke="#777" stroke-width="1"/><path d="M2 13 L32 4.5 V13Z" fill="#2ec82e"/></svg>
 <svg class="a" style="left:379px;top:208px" width="9" height="10"><g fill="#b0b0b0"><rect x="6" y="1" width="1" height="1"/><rect x="3" y="4" width="1" height="1"/><rect x="6" y="4" width="1" height="1"/><rect x="0" y="7" width="1" height="1"/><rect x="3" y="7" width="1" height="1"/><rect x="6" y="7" width="1" height="1"/></g></svg>
</div>

</body></html>
